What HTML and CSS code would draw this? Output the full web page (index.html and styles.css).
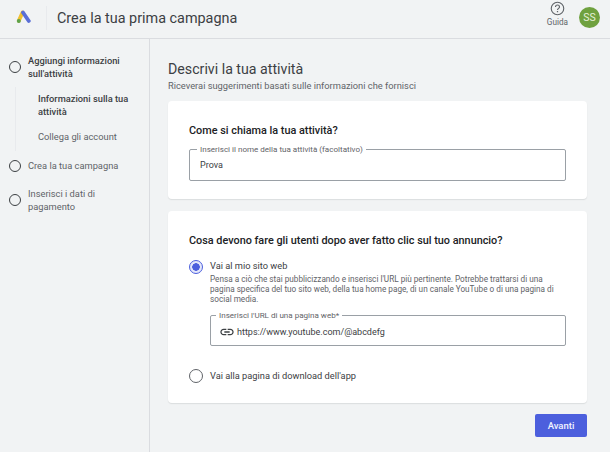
FILE: index.html
```html
<!DOCTYPE html>
<html lang="it">
<head>
<meta charset="utf-8">
<title>Crea la tua prima campagna</title>
<link rel="stylesheet" href="styles.css">
</head>
<body>
<header class="topbar">
  <svg class="logo" viewBox="0 0 16 14" width="16" height="14" aria-hidden="true">
    <path d="M6.500 2.500 L2.800 10.800" stroke="#f0c030" stroke-width="3.800" stroke-linecap="round" fill="none"/>
    <path d="M7 2.500 L12.800 11" stroke="#5a6fd6" stroke-width="3.800" stroke-linecap="round" fill="none"/>
    <circle cx="2.800" cy="11" r="2" fill="#5da24a"/>
  </svg>
  <div class="topbar-rule"></div>
  <h1 class="page-title">Crea la tua prima campagna</h1>
  <div class="help">
    <svg viewBox="0 0 24 24" width="15" height="15" aria-hidden="true">
      <circle cx="12" cy="12" r="10" fill="none" stroke="#5f6368" stroke-width="1.800"/>
      <path d="M8.800 9.500a3.200 3.200 0 0 1 6.400 0c0 2.200-3.200 2.400-3.200 5" fill="none" stroke="#5f6368" stroke-width="1.800"/>
      <rect x="11" y="16" width="2" height="2" fill="#5f6368"/>
    </svg>
    <span>Guida</span>
  </div>
  <div class="avatar">SS</div>
</header>
<div class="shell">
  <nav class="sidebar">
    <div class="step step-active">
      <span class="step-dot"></span>
      <span>Aggiungi informazioni sull'attività</span>
    </div>
    <div class="substeps">
      <div class="substep substep-active">Informazioni sulla tua attività</div>
      <div class="substep">Collega gli account</div>
    </div>
    <div class="step step-single">
      <span class="step-dot"></span>
      <span>Crea la tua campagna</span>
    </div>
    <div class="step step-last">
      <span class="step-dot"></span>
      <span>Inserisci i dati di pagamento</span>
    </div>
  </nav>
  <main class="content">
    <h2 class="heading">Descrivi la tua attività</h2>
    <p class="subheading">Riceverai suggerimenti basati sulle informazioni che fornisci</p>
    <section class="card card-name">
      <h3 class="card-title">Come si chiama la tua attività?</h3>
      <fieldset class="field">
        <legend>Inserisci il nome della tua attività (facoltativo)</legend>
        <span class="field-value field-name-value">Prova</span>
      </fieldset>
    </section>
    <section class="card card-goal">
      <h3 class="card-title">Cosa devono fare gli utenti dopo aver fatto clic sul tuo annuncio?</h3>
      <div class="option option-first">
        <span class="radio radio-on"></span>
        <div class="option-body">
          <div class="option-label">Vai al mio sito web</div>
          <p class="option-help">Pensa a ciò che stai pubblicizzando e inserisci l'URL più pertinente. Potrebbe trattarsi di una pagina specifica del tuo sito web, della tua home page, di un canale YouTube o di una pagina di social media.</p>
          <fieldset class="field field-url">
            <legend>Inserisci l'URL di una pagina web*</legend>
            <svg class="link-icon" viewBox="0 0 24 24" width="16" height="16" aria-hidden="true">
              <path d="M3.900 12c0-1.700 1.400-3.100 3.100-3.100h4V7H7c-2.800 0-5 2.200-5 5s2.200 5 5 5h4v-1.900H7c-1.700 0-3.100-1.400-3.100-3.100zM8 13h8v-2H8v2zm9-6h-4v1.900h4c1.700 0 3.100 1.400 3.100 3.100s-1.400 3.100-3.100 3.100h-4V17h4c2.800 0 5-2.200 5-5s-2.200-5-5-5z" fill="#3c4043"/>
            </svg>
            <span class="field-value">https://www.youtube.com/@abcdefg</span>
          </fieldset>
        </div>
      </div>
      <div class="option option-second">
        <span class="radio"></span>
        <div class="option-label">Vai alla pagina di download dell'app</div>
      </div>
    </section>
    <div class="actions"><button class="next" type="button">Avanti</button></div>
  </main>
</div>
</body>
</html>
```
FILE: styles.css
```css
* { box-sizing: border-box; }
html, body { margin: 0; height: 100%; }
body {
  width: 610px;
  height: 452px;
  overflow: hidden;
  background: #f1f3f4;
  color: #3c4043;
  font-family: Roboto, "Liberation Sans", sans-serif;
}
.topbar {
  height: 39px;
  display: flex;
  align-items: center;
  border-bottom: 1px solid #dadce0;
  padding: 0 10px 0 16px;
}
.logo { flex: none; margin-bottom: 4px; }
.topbar-rule { width: 1px; height: 24px; background: #e8eaed; margin: 0 10px 2px 14px; }
.page-title {
  margin: 0 0 2px;
  font-size: 14.400px;
  font-weight: 400;
  color: #3c4043;
  flex: 1;
}
.help {
  display: flex;
  flex-direction: column;
  align-items: center;
  align-self: flex-start;
  padding-top: 1px;
  font-size: 8.200px;
  line-height: 9px;
  color: #5f6368;
  gap: 2px;
  margin-right: 11px;
}
.avatar {
  width: 21px;
  height: 21px;
  margin-bottom: 3px;
  border-radius: 50%;
  background: #6fa13f;
  color: #e6f0d8;
  font-size: 10.500px;
  display: flex;
  align-items: center;
  justify-content: center;
}
.shell { display: flex; height: 413px; }
.sidebar {
  width: 150px;
  flex: none;
  border-right: 1px solid #dadce0;
  padding: 15px 8px 0 9px;
  font-size: 9.300px;
  line-height: 13px;
  color: #5f6368;
}
.step { display: flex; align-items: center; gap: 7px; }
.step-active { font-weight: 500; color: #3c4043; }
.step-dot {
  width: 12px;
  height: 12px;
  flex: none;
  border: 1.300px solid #3c4043;
  border-radius: 50%;
}
.substeps {
  margin: 7px 0 0 6px;
  border-left: 1px solid #e8eaed;
  padding: 4.500px 0 7.500px 22px;
}
.substep-active { font-weight: 500; color: #3c4043; margin-bottom: 12.500px; }
.step-single { margin-top: 8.500px; }
.step-last { margin-top: 15px; }
.content { flex: 1; padding: 21px 23px 0 18px; }
.heading { margin: 0; font-size: 14.200px; line-height: 18px; font-weight: 400; color: #3c4043; }
.subheading { margin: 2px 0 0; font-size: 9.300px; line-height: 12px; color: #5f6368; }
.card {
  background: #fff;
  border-radius: 4px;
  box-shadow: 0 1px 1px rgba(60, 64, 67, .12);
  padding: 0 21px;
}
.card-name { height: 98px; margin-top: 9px; padding-top: 21.500px; }
.card-goal { height: 192px; margin-top: 12px; padding-top: 21.500px; }
.card-title { margin: 0; font-size: 10.850px; line-height: 15px; font-weight: 500; color: #202124; }
.field {
  margin: 0;
  min-width: 0;
  border: 1px solid #9aa0a6;
  border-radius: 2px;
  padding: 0 10px;
  display: flex;
  align-items: center;
}
.card-name .field { margin-top: 7.500px; height: 36px; }
.field legend {
  margin-left: -3px;
  padding: 0 3px;
  font-size: 8.050px;
  line-height: 9px;
  color: #5f6368;
  height: 9px;
}
.field-value { font-size: 9px; color: #3c4043; }
.field-name-value { margin-bottom: 4px; }
.option { display: flex; gap: 7px; }
.option-first { margin-top: 11.500px; }
.option-second { margin-top: 23px; align-items: center; }
.radio {
  width: 14px;
  height: 14px;
  flex: none;
  border: 1.500px solid #5f6368;
  border-radius: 50%;
  background: #fff;
}
.radio-on {
  margin-top: 1px;
  border-color: #4c5fdd;
  background: radial-gradient(circle, #4c5fdd 0 3.500px, #e4e7fa 4px);
}
.option-body { flex: 1; min-width: 0; }
.option-label { font-size: 9.250px; line-height: 14px; color: #3c4043; }
.option-help { margin: 1px 0 0; font-size: 8.200px; line-height: 10px; color: #5f6368; }
.field-url { margin-top: 6.500px; height: 35.500px; padding: 0 8px; gap: 2px; }
.link-icon { flex: none; }
.actions { display: flex; justify-content: flex-end; margin-top: 11px; }
.next {
  width: 52px;
  height: 23px;
  border: 0;
  border-radius: 2px;
  background: #4c5fdd;
  color: #f1f3ff;
  font: 500 9.500px Roboto, "Liberation Sans", sans-serif;
  padding: 0;
}
```
